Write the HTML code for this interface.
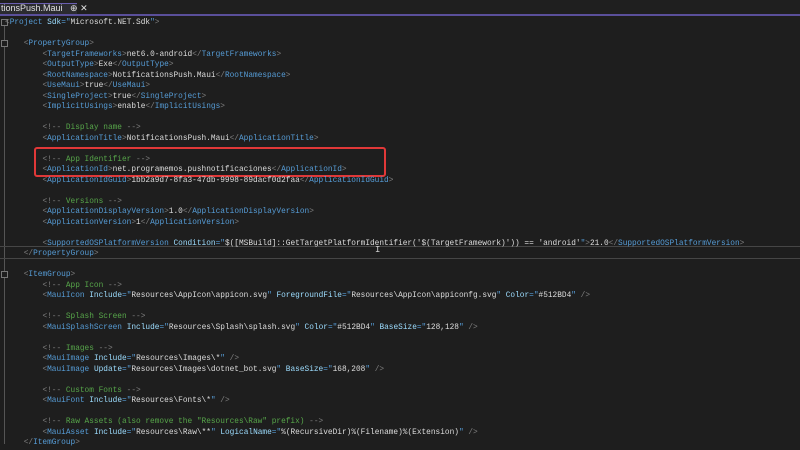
<!DOCTYPE html>
<html><head><meta charset="utf-8"><style>
html,body{margin:0;padding:0;width:800px;height:450px;background:#1e1e1e;overflow:hidden}
.code{position:absolute;left:5px;top:18px;font-family:"Liberation Mono",monospace;font-size:7.8px;line-height:10.5px;white-space:pre;color:#dcdcdc}
.b{color:#808080}.t{color:#569cd6}.a{color:#9cdcfe}.q{color:#569cd6}.c{color:#57a64a}.v{color:#d0d0d0}
</style></head><body>
<div style="position:absolute;left:0;top:0;width:800px;height:15px;background:#1f1f1f"></div>
<div style="position:absolute;left:0;top:3px;width:77px;height:12px;background:#2b2b30;border-top:1px solid #6a5fb0"></div>
<div style="position:absolute;left:1px;top:3px;font-family:'Liberation Sans',sans-serif;font-size:9px;color:#e0e0e0;white-space:pre">tionsPush.Maui   ⊕ ✕</div>
<div style="position:absolute;left:0;top:14px;width:800px;height:2px;background:#5a4f9a"></div>
<div style="position:absolute;left:4px;top:24px;width:1px;height:420px;background:#555"></div>
<div style="position:absolute;left:1px;top:19px;width:5px;height:5px;border:1px solid #777;background:#1e1e1e"></div>
<div style="position:absolute;left:1px;top:40px;width:5px;height:5px;border:1px solid #777;background:#1e1e1e"></div>
<div style="position:absolute;left:1px;top:271px;width:5px;height:5px;border:1px solid #777;background:#1e1e1e"></div>
<div style="position:absolute;left:0;top:246px;width:800px;height:11px;border-top:1px solid #464646;border-bottom:1px solid #464646"></div>
<div style="position:absolute;left:34px;top:147px;width:348px;height:26px;border:2px solid #e03838;border-radius:3px"></div>
<div class="code"><span class="b">&lt;</span><span class="t">Project</span> <span class="a">Sdk</span><span class="q">="</span>Microsoft.NET.Sdk<span class="q">"</span><span class="b">&gt;</span>

    <span class="b">&lt;</span><span class="t">PropertyGroup</span><span class="b">&gt;</span>
        <span class="b">&lt;</span><span class="t">TargetFrameworks</span><span class="b">&gt;</span>net6.0-android<span class="b">&lt;/</span><span class="t">TargetFrameworks</span><span class="b">&gt;</span>
        <span class="b">&lt;</span><span class="t">OutputType</span><span class="b">&gt;</span>Exe<span class="b">&lt;/</span><span class="t">OutputType</span><span class="b">&gt;</span>
        <span class="b">&lt;</span><span class="t">RootNamespace</span><span class="b">&gt;</span>NotificationsPush.Maui<span class="b">&lt;/</span><span class="t">RootNamespace</span><span class="b">&gt;</span>
        <span class="b">&lt;</span><span class="t">UseMaui</span><span class="b">&gt;</span>true<span class="b">&lt;/</span><span class="t">UseMaui</span><span class="b">&gt;</span>
        <span class="b">&lt;</span><span class="t">SingleProject</span><span class="b">&gt;</span>true<span class="b">&lt;/</span><span class="t">SingleProject</span><span class="b">&gt;</span>
        <span class="b">&lt;</span><span class="t">ImplicitUsings</span><span class="b">&gt;</span>enable<span class="b">&lt;/</span><span class="t">ImplicitUsings</span><span class="b">&gt;</span>

        <span class="b">&lt;!--</span><span class="c"> Display name </span><span class="b">--&gt;</span>
        <span class="b">&lt;</span><span class="t">ApplicationTitle</span><span class="b">&gt;</span>NotificationsPush.Maui<span class="b">&lt;/</span><span class="t">ApplicationTitle</span><span class="b">&gt;</span>

        <span class="b">&lt;!--</span><span class="c"> App Identifier </span><span class="b">--&gt;</span>
        <span class="b">&lt;</span><span class="t">ApplicationId</span><span class="b">&gt;</span>net.programemos.pushnotificaciones<span class="b">&lt;/</span><span class="t">ApplicationId</span><span class="b">&gt;</span>
        <span class="b">&lt;</span><span class="t">ApplicationIdGuid</span><span class="b">&gt;</span>1bb2a9d7-8fa3-47db-9998-89dacf0d2faa<span class="b">&lt;/</span><span class="t">ApplicationIdGuid</span><span class="b">&gt;</span>

        <span class="b">&lt;!--</span><span class="c"> Versions </span><span class="b">--&gt;</span>
        <span class="b">&lt;</span><span class="t">ApplicationDisplayVersion</span><span class="b">&gt;</span>1.0<span class="b">&lt;/</span><span class="t">ApplicationDisplayVersion</span><span class="b">&gt;</span>
        <span class="b">&lt;</span><span class="t">ApplicationVersion</span><span class="b">&gt;</span>1<span class="b">&lt;/</span><span class="t">ApplicationVersion</span><span class="b">&gt;</span>

        <span class="b">&lt;</span><span class="t">SupportedOSPlatformVersion</span> <span class="a">Condition</span><span class="q">="</span>$([MSBuild]::GetTargetPlatformIdentifier('$(TargetFramework)')) == 'android'<span class="q">"</span><span class="b">&gt;</span>21.0<span class="b">&lt;/</span><span class="t">SupportedOSPlatformVersion</span><span class="b">&gt;</span>
    <span class="b">&lt;/</span><span class="t">PropertyGroup</span><span class="b">&gt;</span>

    <span class="b">&lt;</span><span class="t">ItemGroup</span><span class="b">&gt;</span>
        <span class="b">&lt;!--</span><span class="c"> App Icon </span><span class="b">--&gt;</span>
        <span class="b">&lt;</span><span class="t">MauiIcon</span> <span class="a">Include</span><span class="q">="</span>Resources\AppIcon\appicon.svg<span class="q">"</span> <span class="a">ForegroundFile</span><span class="q">="</span>Resources\AppIcon\appiconfg.svg<span class="q">"</span> <span class="a">Color</span><span class="q">="</span>#512BD4<span class="q">"</span> <span class="b">/&gt;</span>

        <span class="b">&lt;!--</span><span class="c"> Splash Screen </span><span class="b">--&gt;</span>
        <span class="b">&lt;</span><span class="t">MauiSplashScreen</span> <span class="a">Include</span><span class="q">="</span>Resources\Splash\splash.svg<span class="q">"</span> <span class="a">Color</span><span class="q">="</span>#512BD4<span class="q">"</span> <span class="a">BaseSize</span><span class="q">="</span>128,128<span class="q">"</span> <span class="b">/&gt;</span>

        <span class="b">&lt;!--</span><span class="c"> Images </span><span class="b">--&gt;</span>
        <span class="b">&lt;</span><span class="t">MauiImage</span> <span class="a">Include</span><span class="q">="</span>Resources\Images\*<span class="q">"</span> <span class="b">/&gt;</span>
        <span class="b">&lt;</span><span class="t">MauiImage</span> <span class="a">Update</span><span class="q">="</span>Resources\Images\dotnet_bot.svg<span class="q">"</span> <span class="a">BaseSize</span><span class="q">="</span>168,208<span class="q">"</span> <span class="b">/&gt;</span>

        <span class="b">&lt;!--</span><span class="c"> Custom Fonts </span><span class="b">--&gt;</span>
        <span class="b">&lt;</span><span class="t">MauiFont</span> <span class="a">Include</span><span class="q">="</span>Resources\Fonts\*<span class="q">"</span> <span class="b">/&gt;</span>

        <span class="b">&lt;!--</span><span class="c"> Raw Assets (also remove the "Resources\Raw" prefix) </span><span class="b">--&gt;</span>
        <span class="b">&lt;</span><span class="t">MauiAsset</span> <span class="a">Include</span><span class="q">="</span>Resources\Raw\**<span class="q">"</span> <span class="a">LogicalName</span><span class="q">="</span>%(RecursiveDir)%(Filename)%(Extension)<span class="q">"</span> <span class="b">/&gt;</span>
    <span class="b">&lt;/</span><span class="t">ItemGroup</span><span class="b">&gt;</span></div>
<div style="position:absolute;left:375px;top:245px;font-family:'Liberation Mono',monospace;font-size:9px;color:#ccc">I</div>
</body></html>
